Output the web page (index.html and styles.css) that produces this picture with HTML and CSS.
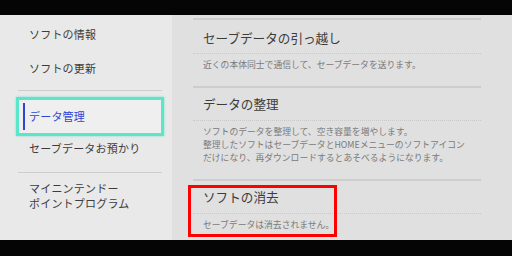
FILE: index.html
```html
<!DOCTYPE html>
<html lang="ja">
<head>
    <meta charset="UTF-8">
    <title>データ管理</title>
    <link rel="stylesheet" href="styles.css">
</head>
<body>
    <div class="screen">
        <div class="bar"></div>
        <div class="main">
            <nav class="menu">
                <div class="menu-item first">ソフトの情報</div>
                <div class="menu-item">ソフトの更新</div>
                <div class="divider"></div>
                <div class="menu-item selected"><span class="mark"></span>データ管理</div>
                <div class="menu-item short">セーブデータお預かり</div>
                <div class="divider low"></div>
                <div class="menu-item two-line">マイニンテンドー<br>ポイントプログラム</div>
            </nav>

            <section class="content">
                <div class="entry">
                    <div class="entry-title first">セーブデータの引っ越し</div>
                    <div class="entry-desc">近くの本体同士で通信して、セーブデータを送ります。</div>
                </div>
                <div class="entry">
                    <div class="entry-title">データの整理</div>
                    <div class="entry-desc">ソフトのデータを整理して、空き容量を増やします。<br>整理したソフトはセーブデータとHOMEメニューのソフトアイコン<br>だけになり、再ダウンロードするとあそべるようになります。</div>
                </div>
                <div class="entry last">
                    <div class="entry-title">ソフトの消去</div>
                    <div class="entry-desc">セーブデータは消去されません。</div>
                </div>
                <div class="highlight"></div>
            </section>
        </div>
        <div class="bar bottom"></div>
    </div>
</body>
</html>
```

FILE: styles.css
```css
:root {
    --text: #3c3c3c;
    --muted: #7a7a7a;
    --line: #cdcdcd;
    --dots: #c9c9c9;
    --accent: #2f44d6;
    --focus: #5ae6c9;
}

* {
    box-sizing: border-box;
    margin: 0;
    padding: 0;
}

body {
    background: #000;
    font-family: "Noto Sans CJK JP", "Noto Sans", sans-serif;
    color: var(--text);
}

.screen {
    width: 512px;
    height: 256px;
    display: flex;
    flex-direction: column;
}

.bar {
    height: 15px;
    background: #050505;
}

.bar.bottom {
    height: 16px;
}

.main {
    flex: 1;
    display: flex;
}

/* left menu */
.menu {
    width: 172px;
    background: #e9e9e9;
    padding-top: 2px;
}

.menu-item {
    height: 34px;
    line-height: 34px;
    padding-left: 29px;
    font-size: 11px;
    letter-spacing: 0.2px;
}

.divider {
    height: 1px;
    margin: 5px 10px 0 18px;
    background: var(--line);
}

.divider.low {
    margin-top: 12px;
}

.menu-item.selected {
    position: relative;
    margin: 6px 8px 0 16px;
    height: 39px;
    line-height: 33px;
    padding-left: 10px;
    border: 3px solid var(--focus);
    box-shadow: 0 0 2px rgba(90, 230, 201, 0.8);
    background: #efefef;
    color: var(--accent);
}

.mark {
    position: absolute;
    left: 4px;
    top: 3px;
    width: 2px;
    height: 27px;
    background: var(--accent);
}

.menu-item.short {
    height: 24px;
    line-height: 24px;
}

.menu-item.two-line {
    height: auto;
    line-height: 15px;
    padding-top: 8px;
}

/* right content */
.content {
    flex: 1;
    position: relative;
    background: #e0e0e0;
    padding: 3px 31px 0 21px;
}

.entry {
    border-top: 2px solid var(--line);
}

.entry-title {
    padding: 7px 10px 8px;
    font-size: 12.6px;
    line-height: 17px;
    border-bottom: 1px dotted var(--dots);
}

.entry-title.first {
    padding-top: 9px;
    padding-bottom: 7px;
}

.entry-desc {
    padding: 4px 10px 15px;
    font-size: 8.8px;
    line-height: 13px;
    color: var(--muted);
}

.entry.last .entry-desc {
    padding-bottom: 0;
}

.highlight {
    position: absolute;
    left: 16px;
    top: 170px;
    width: 149px;
    height: 52px;
    border: 3px solid #f00;
}
```
